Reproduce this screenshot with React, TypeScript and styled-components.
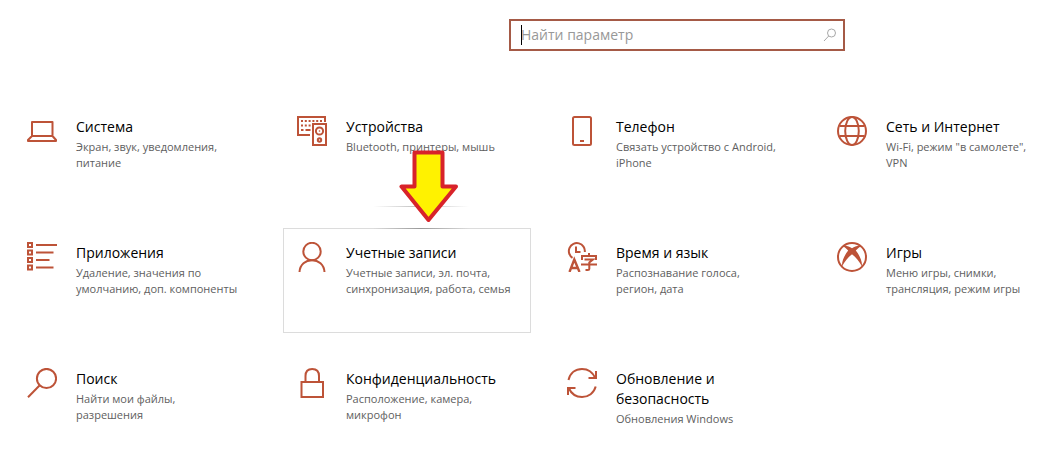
import React from "react";
import styled, { createGlobalStyle, css } from "styled-components";

const accent = "#bd5338";

const GlobalStyle = createGlobalStyle`
  *, *::before, *::after { box-sizing: border-box; }
  body {
    margin: 0;
    background: #fff;
    color: #000;
    font-family: "Open Sans", "Noto Sans", sans-serif;
  }
`;

const Page = styled.main`
  padding: 19px 0 16px 13px;
`;

const SearchBar = styled.div`
  display: flex;
  justify-content: flex-end;
  padding-right: 193px;
`;

const SearchField = styled.label`
  position: relative;
  display: flex;
  align-items: center;
  width: 336px;
  height: 32px;
  padding: 0 6px 0 10px;
  border: 2px solid #a55a46;
  background: #fff;
`;

const SearchInput = styled.input`
  flex: 1;
  min-width: 0;
  padding: 0;
  border: 0;
  outline: 0;
  background: transparent;
  font-family: inherit;
  font-size: 14px;
  line-height: 20px;
  color: #000;

  &::placeholder {
    color: #989898;
    opacity: 1;
  }
`;

const Caret = styled.span`
  position: absolute;
  left: 10px;
  top: 4px;
  width: 1px;
  height: 20px;
  background: #000;
`;

const Grid = styled.nav`
  display: grid;
  grid-template-columns: repeat(3, minmax(0, 248fr)) minmax(0, 215fr);
  gap: 21px 22px;
  margin-top: 51px;
`;

const Cell = styled.div`
  position: relative;
  display: flex;
`;

const Card = styled.a<{ $active?: boolean }>`
  flex: 1;
  min-width: 0;
  display: flex;
  gap: 19px;
  min-height: 105px;
  padding: 13px 0 10px 13px;
  border: 1px solid transparent;
  color: inherit;
  text-decoration: none;

  ${(p) =>
    p.$active &&
    css`
      border-color: #dcdcdc;
    `}
`;

const Icon = styled.svg`
  flex: none;
  width: 30px;
  height: 30px;
  fill: none;
  stroke: ${accent};
  stroke-width: 2;
`;

const SearchIcon = styled.svg`
  flex: none;
  width: 14px;
  height: 14px;
  fill: none;
  stroke: #a8a8a8;
`;

const Text = styled.span`
  display: flex;
  flex-direction: column;
  gap: 2px;
  padding-top: 1px;
  white-space: pre;
`;

const Title = styled.span`
  font-size: 14px;
  line-height: 20px;
`;

const Description = styled.span`
  font-size: 11px;
  line-height: 16px;
  color: #606060;
`;

const Arrow = styled.svg`
  position: absolute;
  left: 116px;
  top: -79px;
  width: 60px;
  height: 75px;
  pointer-events: none;
`;

const Glint = styled.span<{ $top: number; $tone: string }>`
  position: absolute;
  left: 90px;
  top: ${(p) => p.$top}px;
  width: 96px;
  height: 1px;
  background: linear-gradient(90deg, transparent, ${(p) => p.$tone}, transparent);
`;

const icons: Record<string, React.ReactNode> = {
  system: (
    <path d="M5 20V6H25.500V20M5 20H25.500L29 24V25H1V24L5 20" strokeLinejoin="round" />
  ),
  devices: (
    <>
      <path d="M13 19H1V1H28V6" />
      <path d="M4 5H26" strokeDasharray="2 1.800" />
      <path d="M4 9.500H14" strokeDasharray="2 1.800" />
      <path d="M4 14h2.500M8.500 14h5" />
      <path d="M16 8H29V29H16Z" />
      <circle cx="22.500" cy="15" r="3.600" />
      <circle cx="22.500" cy="15" r=".8" fill={accent} stroke="none" />
      <circle cx="22.500" cy="24" r="1.700" />
    </>
  ),
  phone: (
    <>
      <rect x="6" y="1" width="18" height="28" rx="1.500" />
      <path d="M13 25h4" />
    </>
  ),
  network: (
    <>
      <circle cx="15" cy="15" r="14" />
      <ellipse cx="15" cy="15" rx="6.800" ry="14" />
      <path d="M2.500 10H27.500M2.500 20H27.500" />
    </>
  ),
  apps: (
    <>
      <path d="M1 1h4v4H1zM1 8.500h4v4H1zM1 16h4v4H1zM1 23.500h4v4H1z" />
      <path d="M9 3h21M9 10.500h17.500M9 18h13.500M9 25.500h17.500" />
    </>
  ),
  accounts: (
    <>
      <circle cx="15" cy="9.500" r="8.700" />
      <path d="M2.500 30C3 22.500 8.500 18.200 15 18.200S27 22.500 27.500 30" />
    </>
  ),
  time: (
    <>
      <path d="M5.500 15.800A8 8 0 1 1 17.800 10M9 4.500V10h4.500" />
      <path d="M2.500 30L7.300 17.500L12.500 30M4 26H11" strokeWidth="2.400" />
      <path d="M15 18v-4h14V18M22 11v3M17.500 17.500h8.500L22.300 20.500v6.500q0 1-1.500 1H18.500M14 22.500h16" />
    </>
  ),
  games: (
    <>
      <circle cx="15" cy="15" r="14" />
      <path
        d="M6 4.200C9 3.200 12 4.500 15 6.200C18 4.500 21 3.200 24 4.200C22.500 5 20.500 6.800 18.800 8.500C22 12.500 25.300 18.500 25 24.500C22.500 19.500 19 15.500 15 12.200C11 15.500 7.500 19.500 5 24.500C4.700 18.500 8 12.500 11.200 8.500C9.500 6.800 7.500 5 6 4.200Z"
        fill={accent}
        stroke="none"
      />
    </>
  ),
  search: (
    <>
      <circle cx="19.500" cy="10.500" r="9.600" />
      <path d="M12.500 17.500L1 29.300" />
    </>
  ),
  privacy: (
    <>
      <path d="M4.500 14H26V29H4.500Z" />
      <path d="M8.500 14V8C8.500 3.500 11 1 15.200 1S22 3.500 22 8V14" />
    </>
  ),
  update: (
    <>
      <path d="M1.500 12C3.200 5 8.500 1 15 1C21 1 25.800 4.500 28.300 10M29 3V10H21.500" />
      <path d="M28.700 18.500C27 25 21.500 29 15 29C9 29 4.200 25.500 1.700 20M1 27V20H8.500" />
    </>
  ),
};

const sections = [
  { id: "system", title: "Система", text: "Экран, звук, уведомления,\nпитание" },
  { id: "devices", title: "Устройства", text: "Bluetooth, принтеры, мышь" },
  { id: "phone", title: "Телефон", text: "Связать устройство с Android,\niPhone" },
  { id: "network", title: "Сеть и Интернет", text: 'Wi-Fi, режим "в самолете",\nVPN' },
  { id: "apps", title: "Приложения", text: "Удаление, значения по\nумолчанию, доп. компоненты" },
  { id: "accounts", title: "Учетные записи", text: "Учетные записи, эл. почта,\nсинхронизация, работа, семья", active: true },
  { id: "time", title: "Время и язык", text: "Распознавание голоса,\nрегион, дата" },
  { id: "games", title: "Игры", text: "Меню игры, снимки,\nтрансляция, режим игры" },
  { id: "search", title: "Поиск", text: "Найти мои файлы,\nразрешения" },
  { id: "privacy", title: "Конфиденциальность", text: "Расположение, камера,\nмикрофон" },
  { id: "update", title: "Обновление и\nбезопасность", text: "Обновления Windows" },
];

export default function App() {
  return (
    <>
      <GlobalStyle />
      <Page>
        <SearchBar>
          <SearchField>
            <SearchInput type="text" placeholder="Найти параметр" aria-label="Найти параметр" />
            <Caret />
            <SearchIcon viewBox="0 0 14 14" aria-hidden="true">
              <circle cx="8.500" cy="5" r="4" />
              <path d="M5.700 8L1 13" />
            </SearchIcon>
          </SearchField>
        </SearchBar>
        <Grid>
          {sections.map((s) => (
            <Cell key={s.id}>
              <Card href={`#${s.id}`} $active={s.active}>
                <Icon viewBox="0 0 30 30" aria-hidden="true">
                  {icons[s.id]}
                </Icon>
                <Text>
                  <Title>{s.title}</Title>
                  <Description>{s.text}</Description>
                </Text>
              </Card>
              {s.active && (
                <>
                  <Glint $top={-22} $tone="#bbb" />
                  <Glint $top={0} $tone="#999" />
                  <Arrow viewBox="0 0 60 75" aria-hidden="true">
                    <path
                      d="M15.500 3.500H43.500V37.500H57L29.500 71L2.500 37.500H15.500Z"
                      fill="#fff200"
                      stroke="#d8232a"
                      strokeWidth="4"
                      strokeLinejoin="round"
                    />
                  </Arrow>
                </>
              )}
            </Cell>
          ))}
        </Grid>
      </Page>
    </>
  );
}
